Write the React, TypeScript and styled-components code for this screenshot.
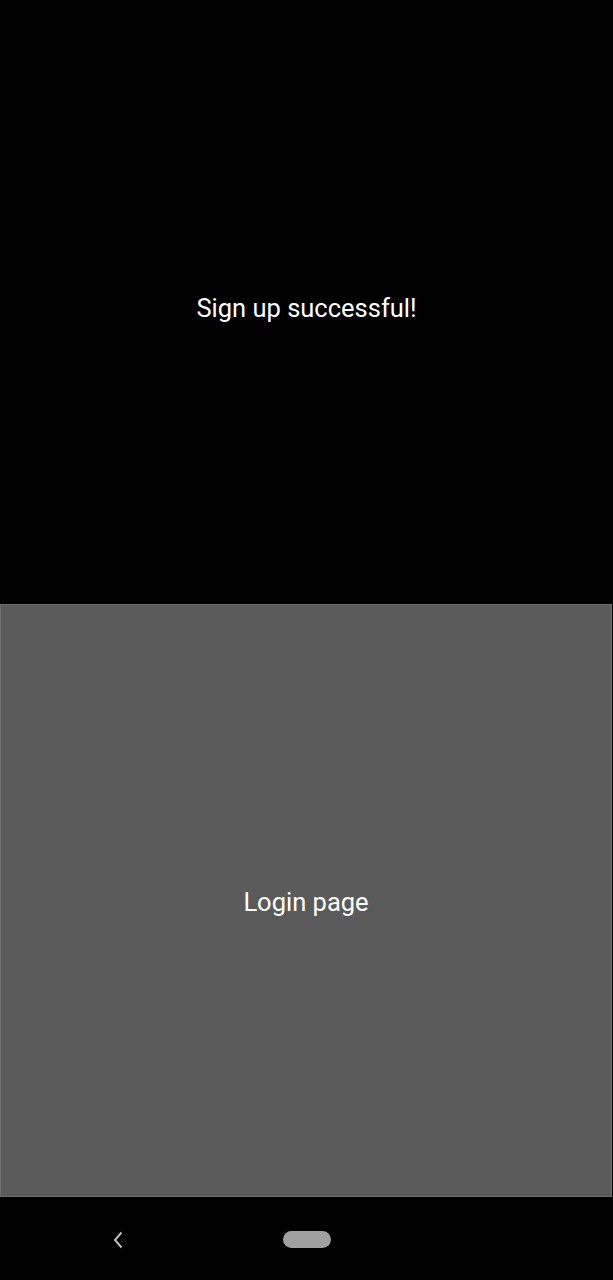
import React from "react";
import styled, { createGlobalStyle } from "styled-components";

const Global = createGlobalStyle`
  html, body { margin: 0; padding: 0; background: #000; }
  body { font-family: Roboto, "Noto Sans", sans-serif; }
`;

const Screen = styled.div`
  width: 613px;
  height: 1280px;
  display: flex;
  flex-direction: column;
  background: #000;
`;

const Top = styled.div`
  height: 604px;
  display: flex;
  align-items: center;
  justify-content: center;
  padding-top: 12px;
  box-sizing: border-box;
`;

const Message = styled.div<{ $size: number }>`
  color: #fff;
  font-size: ${(p) => p.$size}px;
  font-family: Roboto, sans-serif;
`;

const Panel = styled.div`
  height: 593px;
  width: 612px;
  box-sizing: border-box;
  background: #5a5a5a;
  border: 1px solid #6e6e6e;
  display: flex;
  align-items: center;
  justify-content: center;
  padding-top: 2px;
`;

const NavBar = styled.div`
  flex: 1;
  display: flex;
  align-items: center;
`;

const Back = styled.div`
  width: 236px;
  display: flex;
  justify-content: center;
  padding-top: 2px;
`;

const Home = styled.div`
  width: 48px;
  height: 17px;
  border-radius: 9px;
  background: #a0a0a0;
  margin-left: 47px;
  margin-top: 2px;
`;

export default function App() {
  return (
    <>
      <Global />
      <Screen>
        <Top>
          <Message $size={25.5}>Sign up successful!</Message>
        </Top>
        <Panel>
          <Message $size={25.5}>Login page</Message>
        </Panel>
        <NavBar>
          <Back>
            <svg width="12" height="18" viewBox="0 0 12 18">
              <path d="M9.5 1.5 L3 9 L9.5 16.5" fill="none" stroke="#bdbdbd" strokeWidth="2" />
            </svg>
          </Back>
          <Home />
        </NavBar>
      </Screen>
    </>
  );
}
